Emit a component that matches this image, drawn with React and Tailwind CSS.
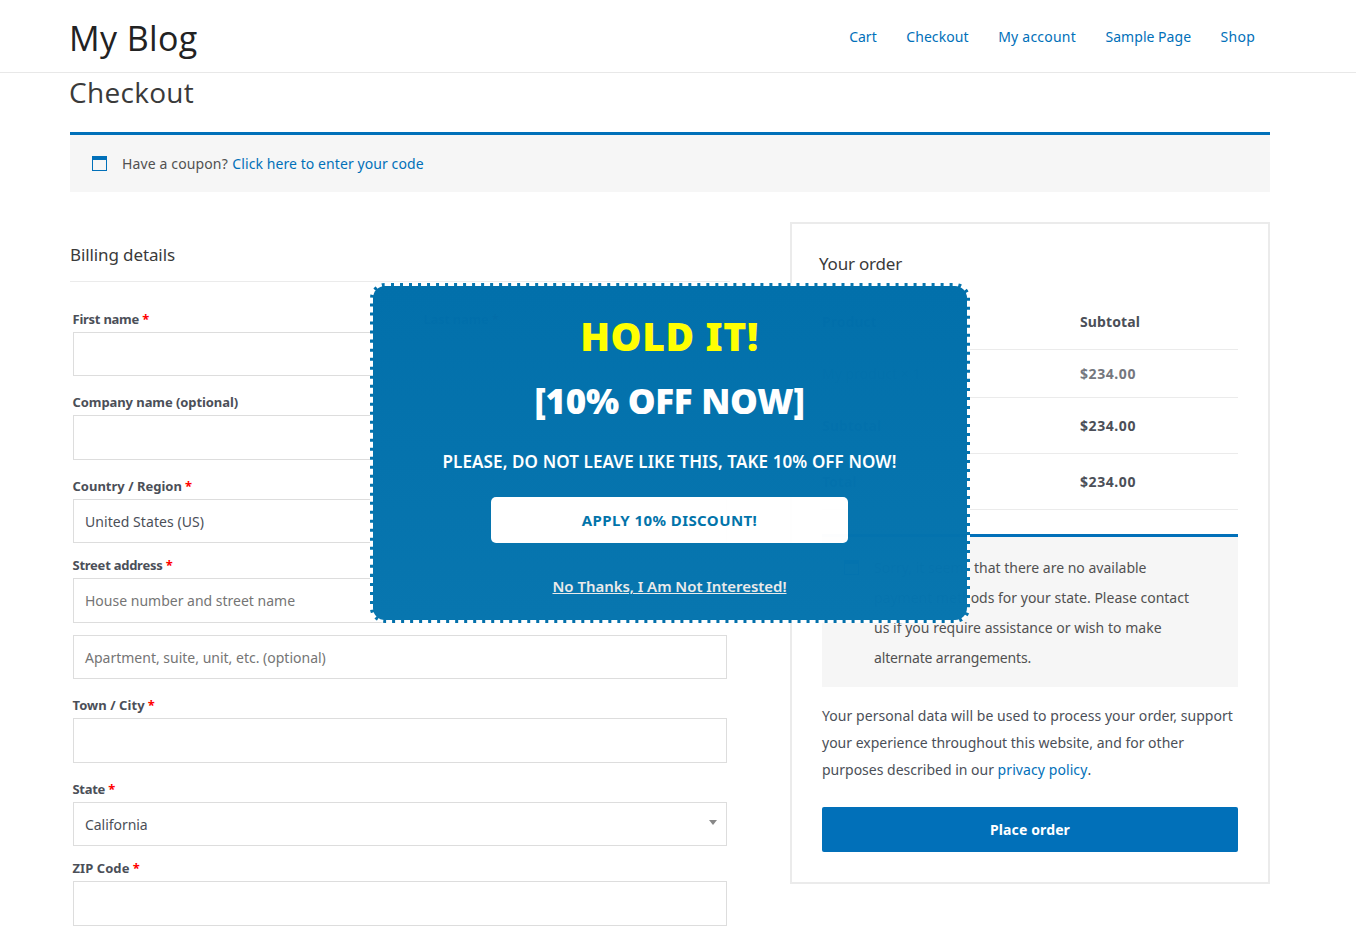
const FONT = "font-['Noto_Sans','Open_Sans',sans-serif]";

function Field({ label, required, tracking = "", className = "", box, children }) {
  return (
    <div className={className}>
      <div className={`-ml-[0.5px] h-5 mb-[3px] text-[13px] leading-5 font-bold text-[#4b4f58] whitespace-nowrap ${tracking}`}>
        {label}
        {required && <span className="text-[#ff0000] font-bold tracking-[-0.2px]"> *</span>}
      </div>
      <Box className={box}>{children}</Box>
    </div>
  );
}

function Box({ className = "", children }) {
  return (
    <div className={`flex items-center justify-between border border-[#dddddd] bg-white pl-[11px] pr-[9px] text-[14px] leading-5 ${className}`}>
      {children}
    </div>
  );
}

function WindowIcon({ className = "" }) {
  return (
    <svg className={className} width="15" height="15" viewBox="0 0 15 15" shapeRendering="crispEdges">
      <path d="M0 0h15v15H0zM1 4v10h13V4z" fill="#0170b9" fillRule="evenodd" />
    </svg>
  );
}

function Row({ name, value, className = "" }) {
  return (
    <div className={`flex items-center border-b border-[#ebebeb] text-[14px] ${className}`}>
      <div className="w-[258px]">{name}</div>
      <div className="font-bold">{value}</div>
    </div>
  );
}

export default function App() {
  return (
    <div className={`relative h-[937px] w-[1356px] overflow-hidden bg-white text-[#4b4f58] ${FONT}`}>
      <header className="flex h-[73px] items-center justify-between border-b border-[#e8e8e8] pl-[69px] pr-[101px]">
        <div className="mt-1 font-['Open_Sans',sans-serif] text-[34px] leading-10 tracking-[0.4px] text-[#222222]">My Blog</div>
        <nav className="mt-[2px] flex gap-[29.5px] text-[14px] leading-5 text-[#0170b9]">
          <a>Cart</a>
          <a className="tracking-[0.09px]">Checkout</a>
          <a className="tracking-[0.22px]">My account</a>
          <a className="tracking-[0.03px]">Sample Page</a>
          <a className="tracking-[0.25px]">Shop</a>
        </nav>
      </header>

      <main className="w-[1200px] ml-[70px]">
        <h1 className="-ml-px h-[59px] font-['Open_Sans',sans-serif] text-[28px] leading-[39px] tracking-[0.3px] text-[#3a3a3a]">Checkout</h1>

        <div className="flex h-[60px] items-center border-t-[3px] border-[#0170b9] bg-[#f6f6f6] pl-[22px] text-[14px] text-[#515151]">
          <WindowIcon />
          <span className="ml-[15px] tracking-[0.13px]">Have a coupon?</span>
          <a className="ml-[4.5px] tracking-[0.08px] text-[#0170b9]">Click here to enter your code</a>
        </div>

        <div className="mt-[30px] flex items-start justify-between">
          <section className="w-[660px]">
            <h3 className="h-[60px] border-b border-[#ebebeb] pt-[21px] text-[17px] leading-6 tracking-[-0.11px] text-[#3a3a3a]">
              Billing details
            </h3>
            <div className="pl-[3px] pt-[27px] pr-[3px]">
              <div className="flex gap-[48px]">
                <Field label="First name" required tracking="tracking-[-0.25px]" className="flex-1" box="h-[44px]" />
                <Field label="Last name" required tracking="tracking-[-0.25px]" className="flex-1" box="h-[44px]" />
              </div>
              <Field label="Company name (optional)" tracking="tracking-[-0.08px]" className="mt-4" box="h-[45px]" />
              <Field label="Country / Region" required className="mt-4" box="h-[44px] pt-px">
                <span className="tracking-[0.06px]">United States (US)</span>
              </Field>
              <Field label="Street address" required tracking="tracking-[-0.25px]" className="mt-3" box="h-[45px]">
                <span className="text-[#757575]">House number and street name</span>
              </Field>
              <Box className="mt-3 h-[44px] pt-px">
                <span className="text-[#757575]">Apartment, suite, unit, etc. (optional)</span>
              </Box>
              <Field label="Town / City" required tracking="tracking-[0.06px]" className="mt-4" box="h-[45px]" />
              <Field label="State" required tracking="tracking-[-0.3px]" className="mt-4" box="h-[44px] pt-px">
                <span className="tracking-[-0.05px]">California</span>
                <svg width="8" height="5" viewBox="0 0 8 5" className="mb-[5px]">
                  <path d="M0 0h8L4 5z" fill="#888888" />
                </svg>
              </Field>
              <Field label="ZIP Code" required tracking="tracking-[0.06px]" className="mt-3" box="h-[45px]" />
            </div>
          </section>

          <section className="h-[662px] w-[480px] border-2 border-[#ebebeb] pl-[30px] pr-[30px]">
            <h3 className="-ml-[3px] h-[70px] pt-[28px] text-[17px] leading-6 tracking-[-0.2px] text-[#3a3a3a]">Your order</h3>
            <Row className="h-[56px] font-bold" name="Product" value={<span className="tracking-[0.11px]">Subtotal</span>} />
            <Row className="h-[48px] text-[#74777e]" name="My product × 1" value={<span className="tracking-[0.57px]">$234.00</span>} />
            <Row className="h-[56px] font-bold" name="Subtotal" value={<span className="tracking-[0.57px]">$234.00</span>} />
            <Row className="h-[56px] font-bold" name="Total" value={<span className="tracking-[0.57px]">$234.00</span>} />

            <div className="mt-6 flex h-[153px] border-t-[3px] border-[#0170b9] bg-[#f6f6f6] pl-[22px] pt-[16px] text-[14px] leading-[30px] text-[#515151]">
              <WindowIcon className="mt-[7px] shrink-0" />
              <p className="ml-[15px] whitespace-nowrap">
                Sorry, it seems that there are no available
                <br />
                payment methods for your state. Please contact
                <br />
                <span className="tracking-[0.02px]">us if you require assistance or wish to make</span>
                <br />
                <span className="tracking-[-0.15px]">alternate arrangements.</span>
              </p>
            </div>

            <p className="mt-[15px] h-[105px] whitespace-nowrap text-[14px] leading-[27px]">
              <span className="tracking-[0.055px]">Your personal data will be used to process your order, support</span>
              <br />
              your experience throughout this website, and for other
              <br />
              purposes described in our <a className="tracking-[0.08px] text-[#0170b9]">privacy policy</a>.
            </p>

            <button className="flex h-[45px] w-full items-center justify-center rounded-[2px] bg-[#0170b9] text-[14px] font-bold tracking-[0.12px] text-white">
              Place order
            </button>
          </section>
        </div>
      </main>

      <div className="absolute left-[370px] top-[283px] flex h-[340px] w-[600px] flex-col items-center rounded-[15px] border-[3px] border-dashed border-white bg-linear-to-b from-[#006fab] to-[#0675af] pr-px opacity-[0.99]">
        <div className="mt-[27px] h-[46px] whitespace-nowrap text-[39px] leading-[46px] font-black tracking-[0.6px] text-[#ffff00]">HOLD IT!</div>
        <div className="mt-[21px] h-[42px] whitespace-nowrap text-[35px] leading-[42px] font-black tracking-[-0.3px] text-white">[10% OFF NOW]</div>
        <div className="mt-[28px] h-6 whitespace-nowrap text-[17px] leading-6 font-semibold tracking-[0.11px] text-white">
          PLEASE, DO NOT LEAVE LIKE THIS, TAKE 10% OFF NOW!
        </div>
        <button className="mt-[23px] h-[46px] w-[357px] rounded-[5px] bg-white text-[15px] font-bold tracking-[0.42px] text-[#0073aa]">
          APPLY 10% DISCOUNT!
        </button>
        <a className="mt-[33px] h-5 whitespace-nowrap text-[15px] leading-5 font-semibold tracking-[-0.05px] text-[#eaeaea] underline">
          No Thanks, I Am Not Interested!
        </a>
      </div>
    </div>
  );
}
